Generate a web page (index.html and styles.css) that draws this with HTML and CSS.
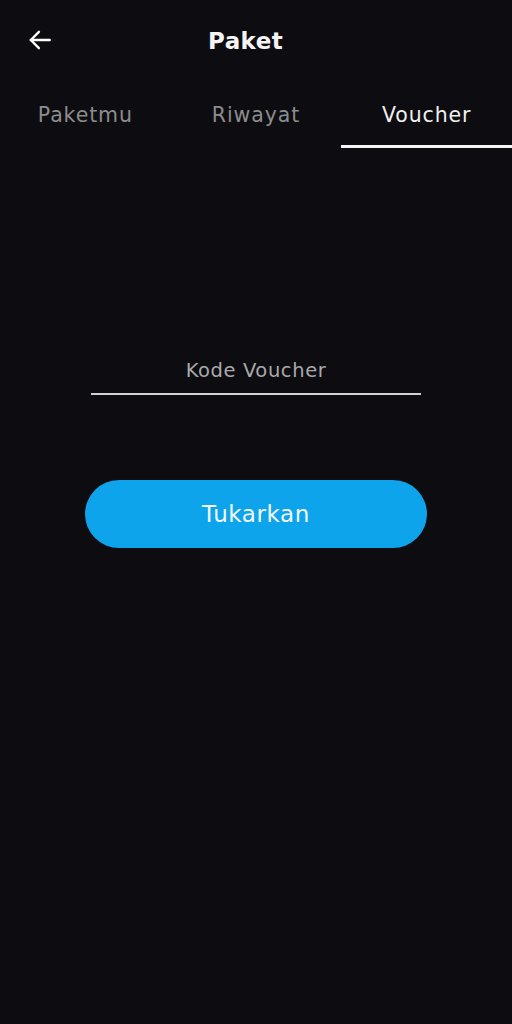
FILE: index.html
```html
<!DOCTYPE html>
<html lang="id">
<head>
<meta charset="utf-8">
<title>Paket</title>
<link rel="stylesheet" href="styles.css">
</head>
<body>
<div class="app">
  <header class="topbar">
    <button class="back" aria-label="Kembali">
      <svg width="26" height="26" viewBox="0 0 24 24" fill="none" stroke="#ffffff" stroke-width="2.2" stroke-linecap="round" stroke-linejoin="round"><path d="M21 12H3.5"/><path d="M11 4.5 3.5 12l7.5 7.5"/></svg>
    </button>
    <h1 class="title">Paket</h1>
  </header>
  <nav class="tabs">
    <div class="tab">Paketmu</div>
    <div class="tab">Riwayat</div>
    <div class="tab active">Voucher</div>
  </nav>
  <main class="voucher">
    <input class="code" type="text" placeholder="Kode Voucher">
    <button class="redeem">Tukarkan</button>
  </main>
</div>
</body>
</html>
```

FILE: styles.css
```css
html, body {
  margin: 0;
  padding: 0;
  background: #0c0c11;
}
body {
  font-family: "DejaVu Sans", "Open Sans", sans-serif;
  color: #f2f2f2;
}
.app {
  width: 512px;
  min-height: 1024px;
  background: #0c0c11;
}
.topbar {
  display: flex;
  align-items: center;
  height: 82px;
  padding-left: 27px;
  box-sizing: border-box;
}
.back {
  background: none;
  border: 0;
  padding: 0;
  width: 26px;
  height: 26px;
  display: flex;
  margin-top: -2px;
}
.title {
  margin: 0 0 0 155px;
  font-size: 23px;
  font-weight: bold;
  color: #f4f4f4;
  letter-spacing: 0.4px;
}
.tabs {
  display: grid;
  grid-template-columns: 1fr 1fr 1fr;
  height: 66px;
}
.tab {
  display: flex;
  align-items: center;
  justify-content: center;
  font-size: 20.5px;
  color: #8c8c8c;
  border-bottom: 3px solid transparent;
  padding-top: 2px;
  letter-spacing: 0.9px;
}
.tab.active {
  color: #f0f0f0;
  border-bottom-color: #f5f5f5;
}
.voucher {
  display: flex;
  flex-direction: column;
  align-items: center;
  padding-top: 200px;
}
.code {
  width: 330px;
  height: 45px;
  box-sizing: content-box;
  padding: 0;
  margin: 0;
  background: transparent;
  border: 0;
  border-bottom: 2px solid #d2d2d2;
  text-align: center;
  font-family: "DejaVu Sans", "Open Sans", sans-serif;
  font-size: 19.5px;
  letter-spacing: 0.6px;
  color: #eeeeee;
  outline: none;
}
.code::placeholder {
  color: #a9a9a9;
}
.redeem {
  margin-top: 85px;
  width: 342px;
  height: 68px;
  border: 0;
  border-radius: 34px;
  background: #0ea4ec;
  color: #f4f8fb;
  font-family: "DejaVu Sans", "Open Sans", sans-serif;
  font-size: 23px;
  letter-spacing: 0.6px;
}
```
